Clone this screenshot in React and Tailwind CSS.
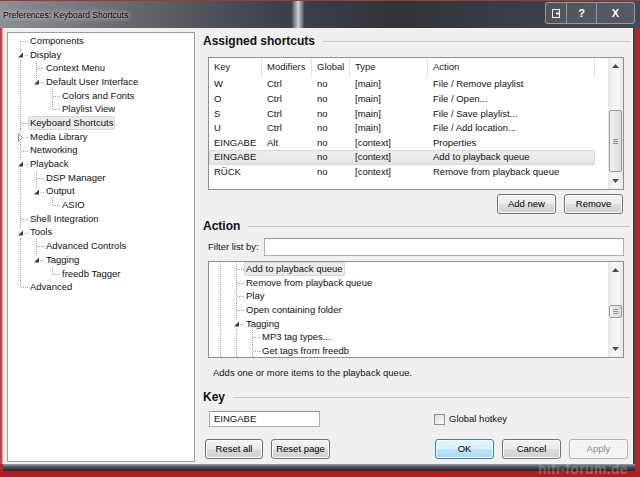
const LINE = "#a3a3a3";
const ROW = 13.7;

const prefTree = [
  { label: "Components", g: [], c: "first" },
  { label: "Display", g: [], c: "tee", exp: "open" },
  { label: "Context Menu", g: [true], c: "tee" },
  { label: "Default User Interface", g: [true], c: "elbow", exp: "open" },
  { label: "Colors and Fonts", g: [true, false], c: "tee" },
  { label: "Playlist View", g: [true, false], c: "elbow" },
  { label: "Keyboard Shortcuts", g: [], c: "tee", sel: true },
  { label: "Media Library", g: [], c: "tee", exp: "closed" },
  { label: "Networking", g: [], c: "tee" },
  { label: "Playback", g: [], c: "tee", exp: "open" },
  { label: "DSP Manager", g: [true], c: "tee" },
  { label: "Output", g: [true], c: "elbow", exp: "open" },
  { label: "ASIO", g: [true, false], c: "elbow" },
  { label: "Shell Integration", g: [], c: "tee" },
  { label: "Tools", g: [], c: "tee", exp: "open" },
  { label: "Advanced Controls", g: [true], c: "tee" },
  { label: "Tagging", g: [true], c: "elbow", exp: "open" },
  { label: "freedb Tagger", g: [true, false], c: "elbow" },
  { label: "Advanced", g: [], c: "elbow" },
];

const actionTree = [
  { label: "Add to playback queue", g: [true], c: "tee", sel: true },
  { label: "Remove from playback queue", g: [true], c: "tee" },
  { label: "Play", g: [true], c: "tee" },
  { label: "Open containing folder", g: [true], c: "tee" },
  { label: "Tagging", g: [true], c: "tee", exp: "open" },
  { label: "MP3 tag types...", g: [true, true], c: "tee" },
  { label: "Get tags from freedb", g: [true, true], c: "tee" },
];

const shortcuts = [
  ["W", "Ctrl", "no", "[main]", "File / Remove playlist"],
  ["O", "Ctrl", "no", "[main]", "File / Open..."],
  ["S", "Ctrl", "no", "[main]", "File / Save playlist..."],
  ["U", "Ctrl", "no", "[main]", "File / Add location..."],
  ["EINGABE", "Alt", "no", "[context]", "Properties"],
  ["EINGABE", "", "no", "[context]", "Add to playback queue"],
  ["RÜCK", "", "no", "[context]", "Remove from playback queue"],
];

function Gutter({ kind, exp }) {
  const h = ROW;
  const mid = 7.5;
  return (
    <svg width="16" height={h} className="shrink-0 overflow-visible">
      {(kind === "guide" || kind === "tee") && (
        <line x1="8.5" y1="0" x2="8.5" y2={h} stroke={LINE} strokeDasharray="1 1" />
      )}
      {kind === "elbow" && (
        <line x1="8.5" y1="0" x2="8.5" y2={mid} stroke={LINE} strokeDasharray="1 1" />
      )}
      {kind === "first" && (
        <line x1="8.5" y1={mid} x2="8.5" y2={h} stroke={LINE} strokeDasharray="1 1" />
      )}
      {kind !== "guide" && kind !== "blank" && (
        <line x1="9" y1={mid} x2="16" y2={mid} stroke={LINE} strokeDasharray="1 1" />
      )}
      {exp === "open" && (
        <>
          <rect x="5" y="3" width="7" height="8" fill="#fff" />
          <polygon points="11,4.5 11,9.5 6,9.5" fill="#3d3d3d" />
        </>
      )}
      {exp === "closed" && (
        <>
          <rect x="5" y="3" width="7" height="9" fill="#fff" />
          <polygon points="6.5,3.5 6.5,11.5 10.5,7.5" fill="#fff" stroke="#8c8c8c" />
        </>
      )}
    </svg>
  );
}

function TreeRow({ item }) {
  return (
    <div className="flex items-center h-[13.7px] shrink-0">
      {item.g.map((on, i) => (
        <Gutter key={i} kind={on ? "guide" : "blank"} />
      ))}
      <Gutter kind={item.c} exp={item.exp} />
      <span
        className={
          "px-[1px] border rounded-[2px] leading-[12px] whitespace-nowrap " +
          (item.sel ? "bg-[#ebebeb] border-[#d6d6d6]" : "border-transparent")
        }
      >
        {item.label}
      </span>
    </div>
  );
}

function Arrow({ up }) {
  return (
    <svg width="7" height="4">
      <polygon points={up ? "3.5,0 7,4 0,4" : "0,0 7,0 3.5,4"} fill="#4d4d4d" />
    </svg>
  );
}

function Scrollbar({ thumb }) {
  return (
    <div className="w-[15px] h-full flex flex-col bg-[linear-gradient(to_right,#e6e6e6,#f4f4f4_30%,#f4f4f4_70%,#e6e6e6)]">
      <div className="h-[16px] flex items-center justify-center">
        <Arrow up />
      </div>
      <div className="flex-1 px-[1px]">
        <div
          className={
            "rounded-[2px] border border-[#9b9b9b] bg-[linear-gradient(to_right,#f4f4f4,#e8e8e8_50%,#d8d8d8)] flex flex-col items-center justify-center gap-[1px] " +
            thumb
          }
        >
          <div className="w-[5px] h-px bg-[#8a8a8a]" />
          <div className="w-[5px] h-px bg-[#8a8a8a]" />
          <div className="w-[5px] h-px bg-[#8a8a8a]" />
        </div>
      </div>
      <div className="h-[16px] flex items-center justify-center">
        <Arrow />
      </div>
    </div>
  );
}

function Heading({ children, className = "" }) {
  return (
    <div className={"flex items-center gap-[8px] h-[16px] " + className}>
      <span className="font-bold text-[12px] text-[#111]">{children}</span>
      <div className="flex-1 h-px bg-[#c9c9c9]" />
    </div>
  );
}

function Btn({ children, kind = "normal", w = "w-[59px]" }) {
  const styles = {
    normal:
      "border-[#707070] bg-[linear-gradient(#f3f3f3_0%,#ebebeb_50%,#dddddd_50%,#cfcfcf_100%)] text-black",
    ok: "border-[#3c7fb1] bg-[linear-gradient(#eaf6fd_0%,#d9f0fc_50%,#bee6fd_50%,#a7d9f5_100%)] text-black",
    off: "border-[#adb2b5] bg-[#f4f4f4] text-[#8a8a8a]",
  };
  return (
    <div
      className={
        "h-[20px] rounded-[3px] border flex items-center justify-center shadow-[inset_0_0_0_1px_#fbfbfb] " +
        styles[kind] +
        " " +
        w
      }
    >
      {children}
    </div>
  );
}

const COLS = "grid grid-cols-[53px_50px_38px_78px_167px_13px]";

export default function App() {
  return (
    <div className="w-[640px] h-[477px] flex flex-col bg-[#b3262b] font-['Liberation_Sans',Arial,sans-serif] text-[9.5px] text-[#111] overflow-hidden relative">
      {/* title bar */}
      <div className="h-[28px] shrink-0 flex items-start border-t border-[#a4363a] bg-[linear-gradient(to_right,#8c9094_0%,#6d7176_16%,#4a5057_34%,#3a4047_45.5%,#cdd5da_46.6%,#3a4047_47.6%,#2e343a_62%,#434a52_100%)]">
        <span className="ml-[3px] mt-[8px] text-[8.5px] text-black [text-shadow:0_0_6px_#d8d8d8,0_0_3px_#d8d8d8]">
          Preferences: Keyboard Shortcuts
        </span>
        <div className="ml-auto mr-[5px] mt-[1px] flex h-[22px]">
          <div className="w-[22px] border border-white/40 rounded-l-[3px] bg-white/10 flex items-center justify-center">
            <svg width="9" height="9">
              <rect x="0.5" y="0.5" width="7" height="8" fill="none" stroke="#f2f2f2" />
              <rect x="4" y="3.5" width="3" height="2" fill="#f2f2f2" />
            </svg>
          </div>
          <div className="w-[30px] border-y border-r border-white/40 bg-white/10 flex items-center justify-center text-white font-bold text-[11px]">
            ?
          </div>
          <div className="w-[38px] border-y border-r border-white/40 rounded-r-[3px] bg-white/10 flex items-center justify-center text-white font-bold text-[11px]">
            X
          </div>
        </div>
      </div>

      {/* client */}
      <div className="flex shrink-0 h-[436px]">
        <div className="w-[2px] bg-[#c2434c]" />
        <div className="w-px bg-[#e6a3a8]" />
        <div className="w-[630px] h-full bg-[#f0f0f0] flex">
          {/* left tree */}
          <div className="ml-[4px] mt-[4px] mb-[2px] w-[188px] border border-[#9c9c9c] bg-white pl-[4px] pt-[1px] flex flex-col">
            {prefTree.map((it) => (
              <TreeRow key={it.label} item={it} />
            ))}
          </div>

          {/* right pane */}
          <div className="ml-[8px] w-[427px] pt-[5px] flex flex-col">
            <Heading>Assigned shortcuts</Heading>

            <div className="ml-[5px] mt-[8px] w-[416px] h-[133px] border border-[#8b8f96] bg-white flex">
              <div className="flex-1 flex flex-col">
                <div className={COLS + " h-[19px] text-[#222]"}>
                  {["Key", "Modifiers", "Global", "Type", "Action", ""].map((h, i) => (
                    <div key={i} className="pl-[5px] flex items-center border-r border-[#e3e3e3] last:border-r-0">
                      {h}
                    </div>
                  ))}
                </div>
                {shortcuts.map((r, i) => (
                  <div
                    key={i}
                    className={
                      COLS +
                      " h-[14.67px] items-center " +
                      (i === 5 ? "bg-[linear-gradient(#f0f0f0,#e4e4e4)] shadow-[inset_0_0_0_1px_#d9d9d9] rounded-[2px] w-[386px]" : "")
                    }
                  >
                    {r.map((c, j) => (
                      <div key={j} className="pl-[5px] whitespace-nowrap">
                        {c}
                      </div>
                    ))}
                  </div>
                ))}
              </div>
              <Scrollbar thumb="mt-[36px] h-[62px]" />
            </div>

            <div className="mt-[4px] pr-[7px] flex justify-end gap-[8px]">
              <Btn>Add new</Btn>
              <Btn>Remove</Btn>
            </div>

            <Heading className="mt-[4px]">Action</Heading>

            <div className="ml-[5px] mt-[4px] w-[416px] h-[18px] flex items-center">
              <span>Filter list by:</span>
              <div className="ml-auto w-[360px] h-full border border-[#abadb3] border-t-[#8f949b] bg-white" />
            </div>

            <div className="ml-[5px] mt-[5px] w-[416px] h-[97px] border border-[#8b8f96] bg-white flex">
              <div className="flex-1 pl-[3px] flex flex-col overflow-hidden">
                {actionTree.map((it) => (
                  <TreeRow key={it.label} item={it} />
                ))}
              </div>
              <Scrollbar thumb="mt-[27px] h-[13px]" />
            </div>

            <div className="ml-[10px] mt-[8px] h-[14px] flex items-center">
              Adds one or more items to the playback queue.
            </div>

            <Heading className="mt-[9px]">Key</Heading>

            <div className="ml-[6px] mt-[6px] h-[16px] flex items-center">
              <div className="w-[111px] h-full border border-[#abadb3] border-t-[#8f949b] bg-white pl-[4px] flex items-center">
                EINGABE
              </div>
              <div className="ml-[114px] w-[11px] h-[11px] border border-[#8f8f8f] bg-[linear-gradient(135deg,#d9d9d9,#ffffff)]" />
              <span className="ml-[4px]">Global hotkey</span>
            </div>

            <div className="mt-[12px] flex justify-between pl-[2px] pr-[2px]">
              <div className="flex gap-[8px]">
                <Btn w="w-[58px]">Reset all</Btn>
                <Btn>Reset page</Btn>
              </div>
              <div className="flex gap-[8px]">
                <Btn kind="ok">OK</Btn>
                <Btn>Cancel</Btn>
                <Btn kind="off">Apply</Btn>
              </div>
            </div>
          </div>
        </div>
        <div className="w-[2px] bg-[#3a3f44]" />
      </div>

      {/* bottom frame */}
      <div className="h-[7px] shrink-0 ml-[3px] mr-[5px] bg-[linear-gradient(#9aa0a5,#4c545b_40%,#1f2428)]" />
      <div className="flex-1 bg-[#b01e22]" />

      <span className="absolute right-[12px] bottom-0 text-[14px] leading-[15px] font-bold text-white/25 tracking-wide">
        hifi-forum.de
      </span>
    </div>
  );
}
